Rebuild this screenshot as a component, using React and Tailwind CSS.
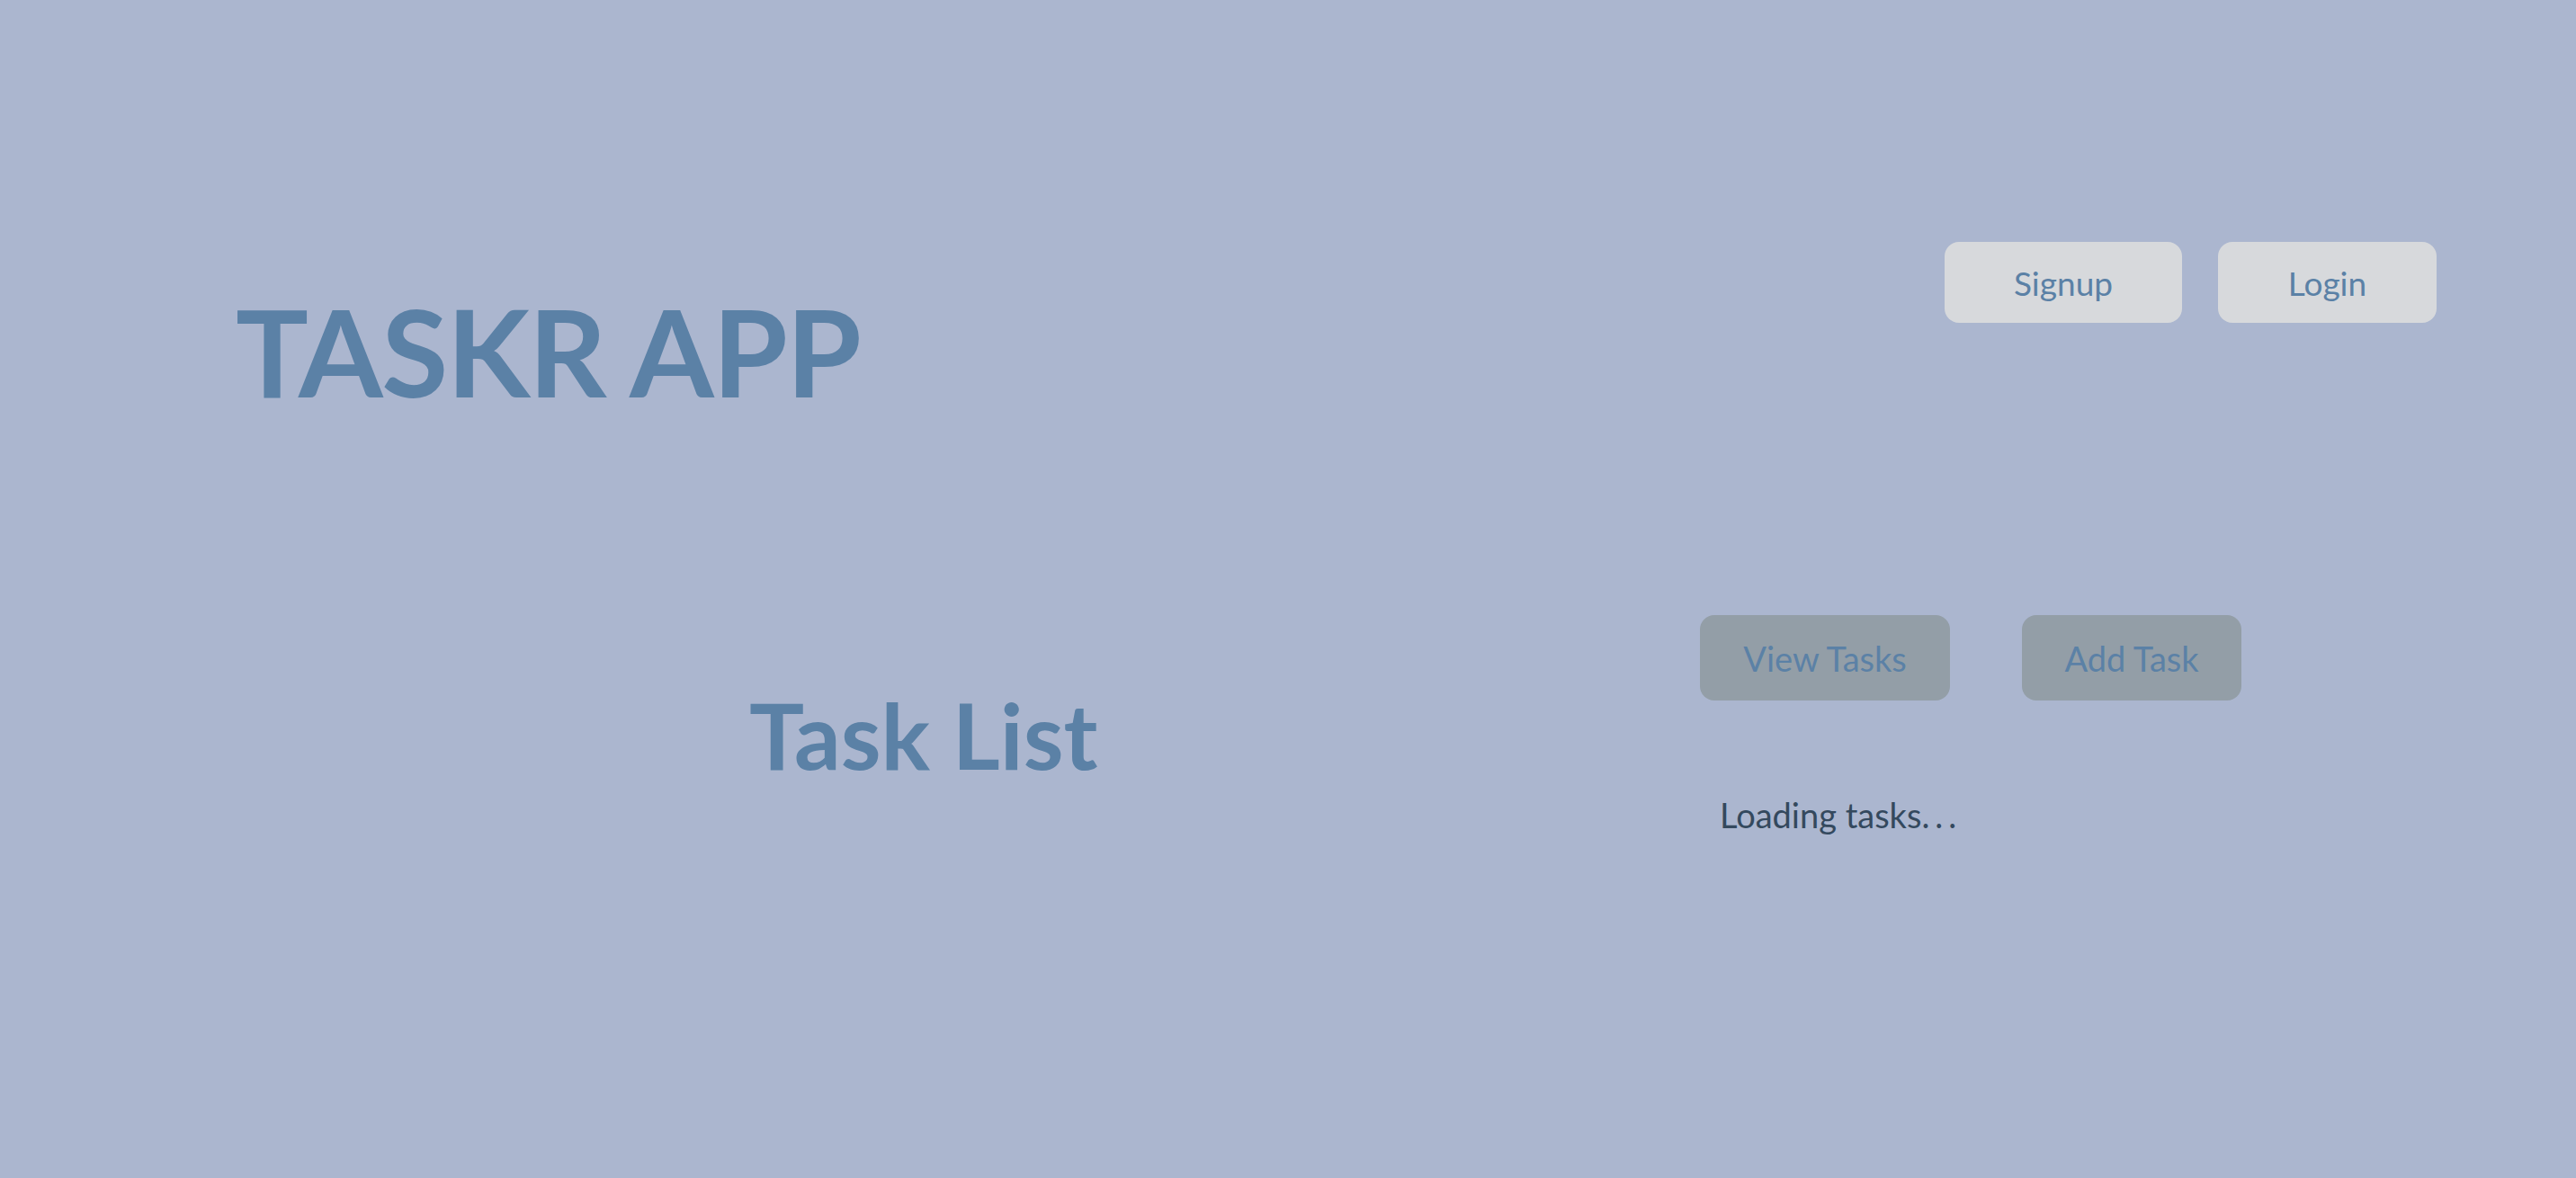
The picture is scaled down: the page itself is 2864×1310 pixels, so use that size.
export default function App() {
  return (
    <div className="min-h-screen w-full bg-[#abb6cf] font-['Lato','Open_Sans',sans-serif] text-[#5b81a6]">
      <header className="flex justify-between pl-[262px] pr-[155px] pt-[269px]">
        <h1 className="mt-[54px] text-[135px] font-bold leading-none tracking-[-1.5px]">TASKR APP</h1>
        <nav className="flex items-start gap-[40px]">
          <button className="h-[90px] w-[264px] rounded-[16px] bg-[#d7d9dc] text-[37px] leading-none">
            Signup
          </button>
          <button className="h-[90px] w-[243px] rounded-[16px] bg-[#d7d9dc] text-[37px] leading-none">
            Login
          </button>
        </nav>
      </header>

      <main className="mt-[226px] flex">
        <div className="w-[1890px] pl-[833px]">
          <h2 className="mt-[82px] text-[102px] font-bold leading-none">Task List</h2>
        </div>
        <div className="flex flex-col">
          <div className="flex gap-[80px]">
            <button className="h-[95px] w-[278px] rounded-[16px] bg-[#939ea7] text-[38px] leading-none">
              View Tasks
            </button>
            <button className="h-[95px] w-[244px] rounded-[16px] bg-[#939ea7] text-[38px] leading-none">
              Add Task
            </button>
          </div>
          <p className="mt-[108px] pl-[22px] text-[38px] leading-none text-[#34495e]">
            Loading tasks<span className="tracking-[6px]">...</span>
          </p>
        </div>
      </main>
    </div>
  );
}
